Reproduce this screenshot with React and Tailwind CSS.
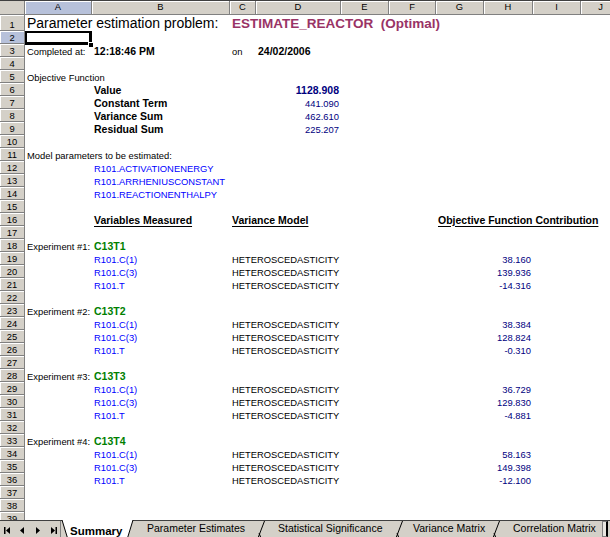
import React from 'react'

const COLS = [
  { k: 'A', w: 67 },
  { k: 'B', w: 138 },
  { k: 'C', w: 26 },
  { k: 'D', w: 85 },
  { k: 'E', w: 48 },
  { k: 'F', w: 47 },
  { k: 'G', w: 48 },
  { k: 'H', w: 49 },
  { k: 'I', w: 48 },
  { k: 'J', w: 40 },
]

const blue = 'text-[#0000ff]'
const navy = 'text-[#000080]'
const bold = 'font-bold text-[10.5px]'

// cells: { col: { t, c, right } }
const experiment = (n, vals) => [
  { A: { t: `Experiment #${n}:` }, B: { t: `C13T${n}`, c: `${bold} text-[#008000]` } },
  { B: { t: 'R101.C(1)', c: blue }, C: { t: 'HETEROSCEDASTICITY' }, H: { t: vals[0], c: navy, right: true } },
  { B: { t: 'R101.C(3)', c: blue }, C: { t: 'HETEROSCEDASTICITY' }, H: { t: vals[1], c: navy, right: true } },
  { B: { t: 'R101.T', c: blue }, C: { t: 'HETEROSCEDASTICITY' }, H: { t: vals[2], c: navy, right: true } },
]

const ROWS = [
  {
    A: { t: 'Parameter estimation problem:', c: 'text-[14px]' },
    C: { t: 'ESTIMATE_REACTOR  (Optimal)', c: 'text-[13.5px] font-bold text-[#993366]' },
  },
  {},
  {
    A: { t: 'Completed at:' },
    B: { t: '12:18:46 PM', c: bold },
    C: { t: 'on' },
    D: { t: '24/02/2006', c: bold },
  },
  {},
  { A: { t: 'Objective Function' } },
  { B: { t: 'Value', c: bold }, D: { t: '1128.908', c: `${bold} ${navy}`, right: true } },
  { B: { t: 'Constant Term', c: bold }, D: { t: '441.090', c: navy, right: true } },
  { B: { t: 'Variance Sum', c: bold }, D: { t: '462.610', c: navy, right: true } },
  { B: { t: 'Residual Sum', c: bold }, D: { t: '225.207', c: navy, right: true } },
  {},
  { A: { t: 'Model parameters to be estimated:' } },
  { B: { t: 'R101.ACTIVATIONENERGY', c: blue } },
  { B: { t: 'R101.ARRHENIUSCONSTANT', c: blue } },
  { B: { t: 'R101.REACTIONENTHALPY', c: blue } },
  {},
  {
    B: { t: 'Variables Measured', c: `${bold} underline underline-offset-2` },
    C: { t: 'Variance Model', c: `${bold} underline underline-offset-2` },
    G: { t: 'Objective Function Contribution', c: `${bold} underline underline-offset-2` },
  },
  {},
  ...experiment(1, ['38.160', '139.936', '-14.316']),
  {},
  ...experiment(2, ['38.384', '128.824', '-0.310']),
  {},
  ...experiment(3, ['36.729', '129.830', '-4.881']),
  {},
  ...experiment(4, ['58.163', '149.398', '-12.100']),
  {},
  {},
  {},
]

function HeaderCell({ w, label, selected }) {
  return (
    <div
      style={{ width: w }}
      className={`flex-none h-full box-border border-r border-[#808080] shadow-[inset_1px_1px_0_#ffffff] flex items-center justify-center ${
        selected ? 'bg-[#b7c1da]' : 'bg-[#d4d0c8]'
      }`}
    >
      {label}
    </div>
  )
}

function Row({ n, row }) {
  const h = n === 1 ? 'h-[16px]' : 'h-[13px]'
  return (
    <div className={`flex ${h}`}>
      <div
        className={`flex-none w-[25px] box-border border-r border-b border-[#808080] shadow-[inset_1px_1px_0_#ffffff] flex items-end justify-center pb-[1px] leading-none ${
          n === 2 ? 'bg-[#b7c1da]' : 'bg-[#d4d0c8]'
        }`}
      >
        {n}
      </div>
      {COLS.map((col) => {
        const cell = row[col.k]
        return (
          <div
            key={col.k}
            style={{ width: col.w }}
            className={`relative flex-none flex items-end whitespace-pre leading-none pb-[1px] ${
              cell?.right ? 'justify-end pr-[2px]' : 'pl-[2px]'
            }`}
          >
            {cell && <span className={cell.c || ''}>{cell.t}</span>}
            {n === 2 && col.k === 'A' && (
              <>
                <div className="absolute left-0 top-0 w-[67px] h-[14px] border-2 border-r-[3px] border-b-[3px] border-black" />
                <div className="absolute left-[63px] top-[11px] w-[6px] h-[6px] bg-black border border-white" />
              </>
            )}
          </div>
        )
      })}
    </div>
  )
}

function NavButtons() {
  return (
    <svg width="61" height="17" className="flex-none">
      <rect x="4" y="6" width="1.5" height="7" fill="#000" />
      <polygon points="10,6 10,13 6,9.5" fill="#000" />
      <polygon points="24,6 24,13 20,9.5" fill="#000" />
      <polygon points="36,6 36,13 40,9.5" fill="#000" />
      <polygon points="51,6 51,13 55,9.5" fill="#000" />
      <rect x="55.5" y="6" width="1.5" height="7" fill="#000" />
      <line x1="60.5" y1="0" x2="60.5" y2="17" stroke="#808080" />
    </svg>
  )
}

function Separator() {
  return (
    <svg width="9" height="17" className="flex-none">
      <line x1="1" y1="17" x2="7.5" y2="0" stroke="#000" strokeWidth="1" />
      <line x1="2" y1="12" x2="4" y2="17" stroke="#000" strokeWidth="1" />
    </svg>
  )
}

function Tab({ w, pl, children }) {
  return (
    <div style={{ width: w }} className="flex-none flex items-center whitespace-nowrap text-[10.5px]">
      <span style={{ paddingLeft: pl }}>{children}</span>
    </div>
  )
}

export default function App() {
  return (
    <div className="w-[610px] h-[537px] overflow-hidden flex flex-col bg-white text-black text-[9.4px] font-['Liberation_Sans',Arial,sans-serif]">
      <div className="flex-1 overflow-hidden">
        {/* column headers */}
        <div className="flex h-[15px] border-t border-[#404040] box-border">
          <div className="flex-none w-[25px] h-full box-border border-r border-b border-[#808080] bg-[#d4d0c8]" />
          {COLS.map((col) => (
            <div key={col.k} className="flex-none h-full box-border border-b border-[#808080]" style={{ width: col.w }}>
              <HeaderCell w={col.w} label={col.k} selected={col.k === 'A'} />
            </div>
          ))}
        </div>
        {ROWS.map((row, i) => (
          <Row key={i} n={i + 1} row={row} />
        ))}
      </div>

      {/* sheet tabs */}
      <div className="flex-none h-[17px] flex bg-[#d4d0c8] border-t border-[#404040] box-border relative">
        <NavButtons />
        <div className="flex-none w-[73px] h-full relative -mt-[1px]">
          <svg width="73" height="18" className="absolute inset-0">
            <polygon points="1,0 6.5,18 66.5,18 72,0" fill="#fff" />
            <line x1="1" y1="0" x2="6.5" y2="18" stroke="#000" />
            <line x1="72" y1="0" x2="66.5" y2="18" stroke="#000" />
          </svg>
          <span className="relative block pl-[9px] pt-[3px] font-bold text-[11.5px]">Summary</span>
        </div>
        <Tab w={123} pl={13}>Parameter Estimates</Tab>
        <Separator />
        <Tab w={129} pl={12}>Statistical Significance</Tab>
        <Separator />
        <Tab w={88} pl={9}>Variance Matrix</Tab>
        <Separator />
        <Tab w={101} pl={12}>Correlation Matrix</Tab>
        <div className="flex-none w-[6px] h-full box-border border border-r-2 border-[#808080] border-r-black bg-[#e8e6e0]" />
      </div>
    </div>
  )
}
